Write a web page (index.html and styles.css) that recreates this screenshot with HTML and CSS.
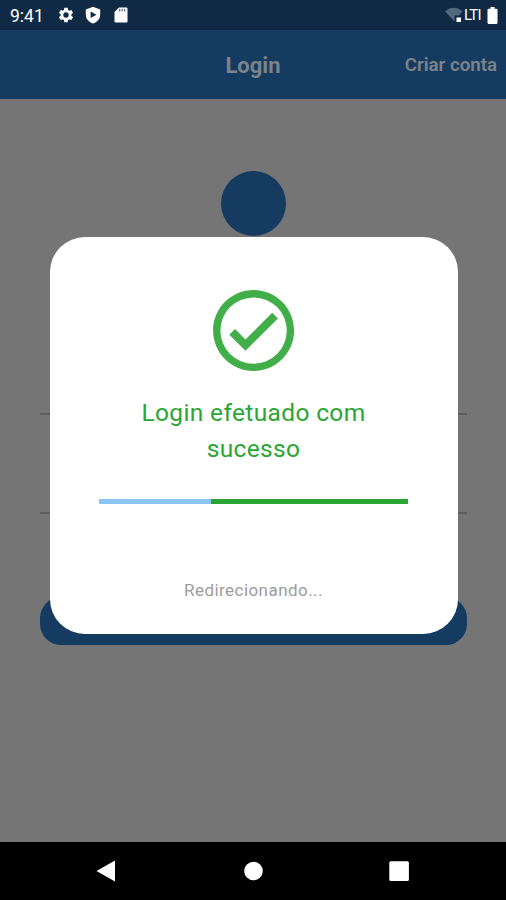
FILE: index.html
```html
<!DOCTYPE html>
<html lang="pt-BR">
<head>
<meta charset="utf-8">
<title>Login</title>
<link rel="stylesheet" href="styles.css">
</head>
<body>
<div class="screen">
  <div class="status">
    <span class="time">9:41</span>
    <svg class="gear" width="18" height="18" viewBox="0 0 24 24"><path fill="#fff" d="M19.14 12.94c.04-.3.06-.61.06-.94s-.02-.64-.07-.94l2.03-1.58a.49.49 0 0 0 .12-.61l-1.92-3.32a.49.49 0 0 0-.59-.22l-2.39.96c-.5-.38-1.03-.7-1.62-.94l-.36-2.54a.48.48 0 0 0-.48-.41h-3.84c-.24 0-.43.17-.47.41l-.36 2.54c-.59.24-1.13.57-1.62.94l-2.39-.96a.48.48 0 0 0-.59.22L2.74 8.87a.47.47 0 0 0 .12.61l2.03 1.58c-.05.3-.09.63-.09.94s.02.64.07.94l-2.03 1.58a.49.49 0 0 0-.12.61l1.92 3.32c.12.22.37.29.59.22l2.39-.96c.5.38 1.03.7 1.62.94l.36 2.54c.05.24.24.41.48.41h3.84c.24 0 .44-.17.47-.41l.36-2.54c.59-.24 1.13-.56 1.62-.94l2.39.96c.22.08.47 0 .59-.22l1.92-3.32a.47.47 0 0 0-.12-.61zM12 15.6a3.6 3.6 0 1 1 0-7.2 3.6 3.6 0 0 1 0 7.2z"/></svg>
    <svg class="shield" width="16" height="18" viewBox="0 0 16 18"><path fill="#fff" d="M8 .7 15.2 3.400V8.500C15.200 13 12 16.300 8 17.400 4 16.300.8 13 .8 8.500V3.400z"/><path fill="#102a45" d="M5.600 5.400 11.500 8.700 5.600 12z"/></svg>
    <svg class="card-icon" width="14" height="16" viewBox="0 0 14 16"><path fill="#fff" d="M5 .5h7.200q1.300 0 1.300 1.300v12.400q0 1.300-1.300 1.300H1.800Q.5 15.500.5 14.200V5z"/><path stroke="#53687d" stroke-width="1.200" d="M5.700 1.800v2.700M8.200 1.800v2.700M10.700 1.800v2.700"/></svg>
    <span class="spacer"></span>
    <svg class="wifi" width="18" height="16" viewBox="0 0 18 16"><path fill="#53687d" d="M0 4.200Q8.700-2.600 17.500 4.200L14 8.500H9.500V14.500z"/><path fill="#fff" d="M11.500 10.500h4.500v4.500h-4.500z"/></svg>
    <span class="network">LTI</span>
    <svg class="battery" width="11" height="17" viewBox="0 0 11 17"><path fill="#fff" d="M3.500 0h4v1.700h1.700Q10.500 1.700 10.500 3v12.500Q10.500 17 9.200 17H1.800Q.5 17 .5 15.500V3q0-1.300 1.300-1.300h1.700z"/></svg>
  </div>
  <header class="bar">
    <span></span>
    <h1>Login</h1>
    <span class="create">Criar conta</span>
  </header>
  <main class="page">
    <div class="avatar"></div>
    <div class="field first"></div>
    <div class="field"></div>
    <div class="button"></div>
  </main>
  <nav class="nav">
    <svg width="506" height="58" viewBox="0 0 506 58"><path fill="#fff" d="M96.500 29 115 18.500v21z"/><circle cx="253.500" cy="29" r="9.300" fill="#fff"/><rect x="389.300" y="19.300" width="19.600" height="19.600" rx="1.500" fill="#fff"/></svg>
  </nav>
  <section class="dialog">
    <svg class="check" width="97.200" height="97.200" viewBox="0 0 24 24"><path fill="#42ae49" d="M12 2C6.480 2 2 6.480 2 12s4.480 10 10 10 10-4.480 10-10S17.520 2 12 2zm0 18.200a8.200 8.200 0 1 1 0-16.400 8.200 8.200 0 0 1 0 16.400zM16.590 7.580 10 14.170l-2.590-2.580L6 13l4 4 8-8z"/></svg>
    <p class="message">Login efetuado com<br>sucesso</p>
    <div class="progress"><div class="rest"></div></div>
    <p class="redirect">Redirecionando...</p>
  </section>
</div>
</body>
</html>
```
FILE: styles.css
```css
body {
  margin: 0;
  font-family: Roboto, "Liberation Sans", sans-serif;
}
.screen {
  position: relative;
  display: flex;
  flex-direction: column;
  width: 506px;
  height: 900px;
  overflow: hidden;
  background: #757575;
}
.status {
  display: flex;
  align-items: center;
  height: 30px;
  padding: 0 8px 0 10px;
  box-sizing: border-box;
  background: #102a45;
  color: #fff;
}
.time { width: 47px; font-size: 17.5px; line-height: 30px; padding-top: 2px; }
.shield { margin-left: 10px; }
.card-icon { margin-left: 13px; }
.spacer { flex: 1; }
.network {
  width: 18px;
  margin-left: 1px;
  font-size: 15px;
  letter-spacing: -0.8px;
  white-space: nowrap;
}
.battery { margin-left: 5px; }
.bar {
  display: grid;
  grid-template-columns: 1fr auto 1fr;
  align-items: center;
  height: 69px;
  padding-right: 9px;
  padding-left: 9px;
  background: #163b60;
  color: #7b838b;
}
h1 { margin: 0; font-size: 22px; font-weight: 700; position: relative; top: 1px; }
.create { justify-self: end; font-size: 18.7px; font-weight: 600; }
.page {
  flex: 1;
  display: flex;
  flex-direction: column;
  align-items: center;
  padding: 72px 39px 0 40px;
}
.avatar { width: 65px; height: 65px; border-radius: 50%; background: #163b60; }
.field { width: 100%; height: 97px; border-bottom: 2px solid #5d5d5d; }
.first { height: 177px; }
.button { width: 100%; height: 48px; margin-top: 83px; border-radius: 21px; background: #163b60; }
.nav { height: 58px; background: #000; }
.nav svg { display: block; }
.dialog {
  position: absolute;
  left: 49.5px;
  top: 237px;
  width: 408px;
  height: 397px;
  border-radius: 35px;
  background: #fff;
  display: flex;
  flex-direction: column;
  align-items: center;
}
.check { margin-top: 45px; flex: none; }
.message {
  margin: 15.8px 0 0;
  color: #2ba633;
  font-size: 24.5px;
  line-height: 36px;
  letter-spacing: 0.35px;
  text-align: center;
}
.progress { width: 309px; height: 5px; margin-top: 32px; background: #8bc5f5; }
.rest { width: 197px; height: 5px; margin-left: auto; background: #2ba633; }
.redirect {
  margin: 75px 0 0;
  color: #9c9c9c;
  font-size: 17px;
  line-height: 22px;
  letter-spacing: 0.45px;
}
```
